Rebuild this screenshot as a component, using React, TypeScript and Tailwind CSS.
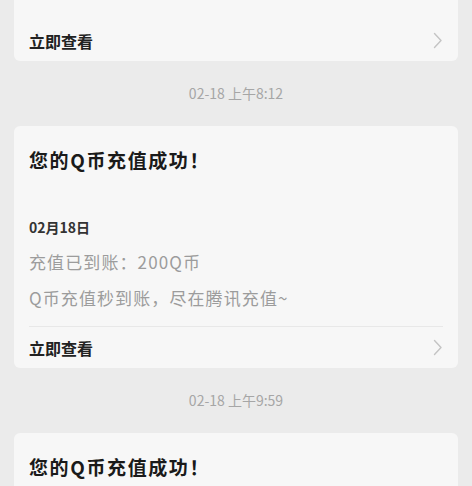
import React from "react";

type Notice = {
  time?: string;
  title: string;
  date: string;
  lines: string[];
};

const notices: Notice[] = [
  {
    title: "您的Q币充值成功！",
    date: "02月18日",
    lines: ["充值已到账：200Q币", "Q币充值秒到账，尽在腾讯充值~"],
  },
  {
    time: "02-18 上午8:12",
    title: "您的Q币充值成功！",
    date: "02月18日",
    lines: ["充值已到账：200Q币", "Q币充值秒到账，尽在腾讯充值~"],
  },
  {
    time: "02-18 上午9:59",
    title: "您的Q币充值成功！",
    date: "02月18日",
    lines: ["充值已到账：200Q币", "Q币充值秒到账，尽在腾讯充值~"],
  },
];

const Chevron: React.FC = () => (
  <svg width="10" height="17" viewBox="0 0 10 17" fill="none">
    <path d="M1.5 1.5 L8 8.5 L1.5 15.5" stroke="#c4c4c4" strokeWidth="1.4" strokeLinecap="round" strokeLinejoin="round" />
  </svg>
);

// the first card is scrolled past the top, only its footer shows
const NoticeCard: React.FC<{ notice: Notice; first?: boolean }> = ({ notice, first }) => (
  <div className="mx-[14px] rounded-[6px] bg-[#f7f7f7]">
    <div className={first ? "invisible px-[15px] pt-[20px] pb-[16px]" : "px-[15px] pt-[20px] pb-[16px]"}>
      <h3 className="text-[19px] leading-[28px] font-bold tracking-[1.6px] text-[#1a1a1a]">{notice.title}</h3>
      <p className="mt-[42px] text-[14px] leading-[22px] font-semibold text-[#333]">{notice.date}</p>
      <div className="mt-[12px] flex flex-col gap-[12px]">
        {notice.lines.map((line, i) => (
          <p key={i} className="text-[17px] leading-[24px] tracking-[1.1px] text-[#9c9c9c]">
            {line}
          </p>
        ))}
      </div>
    </div>
    <div className={first ? "mx-[15px] h-px" : "mx-[15px] h-px bg-[#e8e8e8]"} />
    <div className="flex h-[41px] items-center justify-between px-[15px]">
      <span className="text-[16px] font-semibold text-[#222]">立即查看</span>
      <Chevron />
    </div>
  </div>
);

const App: React.FC = () => {
  return (
    <div
      className="h-[486px] overflow-hidden bg-[#ebebeb]"
      style={{ fontFamily: '"Noto Sans CJK SC", "Noto Sans", sans-serif' }}
    >
      <div className="-mt-[181px]">
        {notices.map((n, i) => (
          <div key={i}>
            {n.time && (
              <div className="flex h-[65px] items-center justify-center text-[14px] text-[#a6a6a6]">
                {n.time}
              </div>
            )}
            <NoticeCard notice={n} first={i === 0} />
          </div>
        ))}
      </div>
    </div>
  );
};

export default App;
